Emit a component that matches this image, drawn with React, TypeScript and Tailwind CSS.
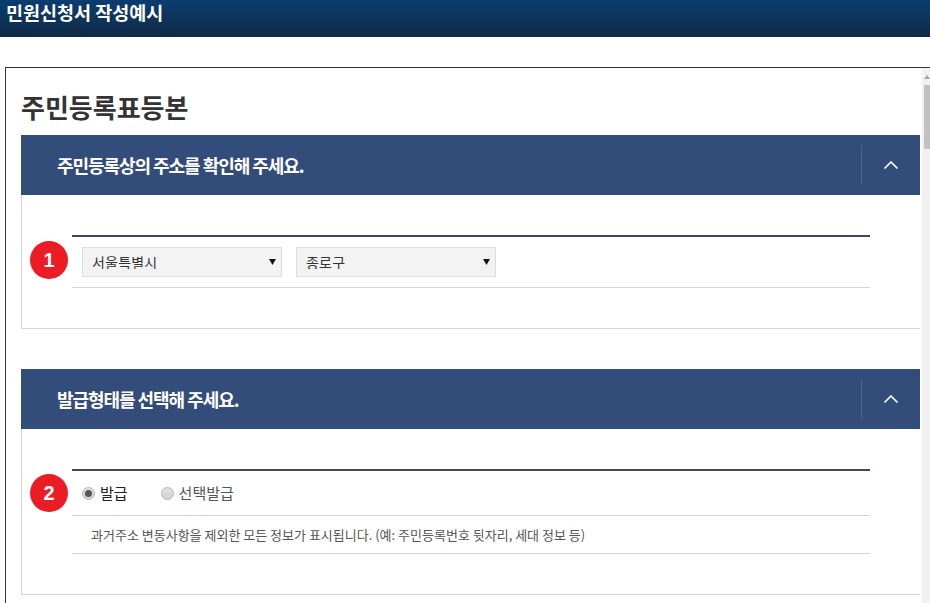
import { ChevronUp } from 'lucide-react';

const fontStack = "font-['Noto_Sans_CJK_KR','Noto_Sans',sans-serif]";

// 섹션 헤더 (파란 바 + 접기 버튼)
function SectionHeader({ title }: { title: string }) {
  return (
    <div className="h-[60px] bg-[#334d7b] flex items-center shrink-0">
      <h2 className="flex-1 pl-9 text-[18px] font-bold text-white tracking-[-1.05px]">{title}</h2>
      <div className="w-[59px] h-10 border-l border-[#4b638d] flex items-center justify-center">
        <ChevronUp size={24} strokeWidth={1.75} className="text-white" />
      </div>
    </div>
  );
}

function StepBadge({ num }: { num: number }) {
  return (
    <div className="w-[38px] h-[38px] rounded-full bg-[#ec1c24] flex items-center justify-center shrink-0 text-white text-[20px] font-bold font-['Liberation_Sans',sans-serif]">
      {num}
    </div>
  );
}

function FakeSelect({ value }: { value: string }) {
  return (
    <div className="relative w-[200px] h-[30px]">
      <select
        defaultValue={value}
        className="appearance-none w-full h-full bg-[#f3f3f3] border border-[#dcdcdc] pl-[9px] text-[14px] tracking-[0.2px] leading-none text-[#333] outline-none"
      >
        <option>{value}</option>
      </select>
      <svg viewBox="0 0 8 7" className="absolute right-[6px] top-[12px] w-[7px] h-[6px]">
        <path d="M0 0h8L4 7z" fill="#111" />
      </svg>
    </div>
  );
}

function Radio({ checked, label, dark }: { checked: boolean; label: string; dark?: boolean }) {
  return (
    <label className="flex items-center gap-[5px]">
      <span className="w-[13px] h-[13px] rounded-full border border-[#b5b5b5] bg-gradient-to-b from-[#e2e2e2] to-[#d2d2d2] flex items-center justify-center">
        {checked && <span className="w-[7px] h-[7px] rounded-full bg-[#555]" />}
      </span>
      <span className={`text-[15px] ${dark ? 'text-[#222]' : 'text-[#555]'}`}>{label}</span>
    </label>
  );
}

export default function App() {
  return (
    <div className={`h-[603px] w-[930px] overflow-hidden bg-white flex flex-col ${fontStack}`}>
      {/* 상단 타이틀 바 */}
      <header className="h-[37px] shrink-0 bg-gradient-to-b from-[#0a3d70] to-[#102a47] pl-[6px]">
        <h1 className="text-[18.5px] leading-[24px] font-bold text-white">민원신청서 작성예시</h1>
      </header>

      <div className="mt-[30px] ml-[5px] w-[925px] h-[600px] shrink-0 border-l border-t border-[#333] flex">
        <main className="w-[914px] pl-[15px] shrink-0">
          <div className="h-[67px] flex items-end pb-[11px]">
            <h1 className="text-[26px] leading-[34px] font-bold text-[#333]">주민등록표등본</h1>
          </div>

          {/* 1. 주소 확인 */}
          <section>
            <SectionHeader title="주민등록상의 주소를 확인해 주세요." />
            <div className="h-[134px] border-l border-b border-[#d5d5d5] pt-10 pl-2 flex items-start gap-1">
              <div className="pt-[6px]">
                <StepBadge num={1} />
              </div>
              <div className="w-[798px] border-t-2 border-[#3b4a5f] border-b border-b-[#d5d5d5] h-[53px] pt-[10px] pl-[10px] flex gap-[14px]">
                <FakeSelect value="서울특별시" />
                <FakeSelect value="종로구" />
              </div>
            </div>
          </section>

          {/* 2. 발급형태 선택 */}
          <section className="mt-10">
            <SectionHeader title="발급형태를 선택해 주세요." />
            <div className="h-[166px] border-l border-b border-[#d5d5d5] pt-10 pl-2 flex items-start gap-1">
              <div className="pt-[5px]">
                <StepBadge num={2} />
              </div>
              <div className="w-[798px] border-t-2 border-[#3b4a5f]">
                <div className="h-[45px] flex items-center gap-[33px] pl-[10px] border-b border-[#d5d5d5]">
                  <Radio checked label="발급" dark />
                  <Radio checked={false} label="선택발급" />
                </div>
                <p className="h-[38px] flex items-center pl-[19px] text-[13px] text-[#555] border-b border-[#d5d5d5]">
                  과거주소 변동사항을 제외한 모든 정보가 표시됩니다. (예: 주민등록번호 뒷자리, 세대 정보 등)
                </p>
              </div>
            </div>
          </section>
        </main>

        {/* 스크롤바 */}
        <div className="ml-[2px] w-2 h-full bg-[#f1f1f1] flex flex-col items-end shrink-0">
          <div className="h-[17px] w-full flex items-center justify-end">
            <svg viewBox="0 0 6 4" className="w-[6px] h-1">
              <path d="M3 0l3 4H0z" fill="#a3a3a3" />
            </svg>
          </div>
          <div className="w-[6px] h-[64px] bg-[#c1c1c1]" />
        </div>
      </div>
    </div>
  );
}
